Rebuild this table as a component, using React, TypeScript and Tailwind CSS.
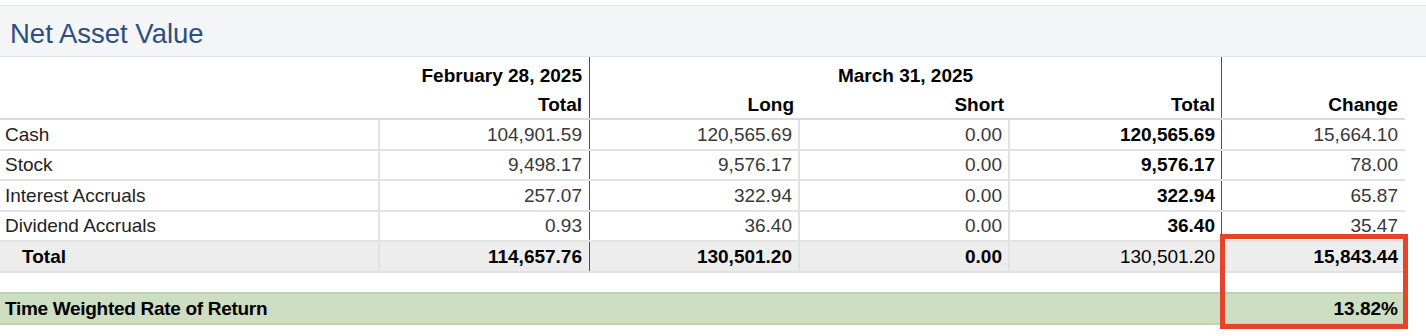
const rows = [
  { label: "Cash", feb: "104,901.59", long: "120,565.69", short: "0.00", total: "120,565.69", change: "15,664.10" },
  { label: "Stock", feb: "9,498.17", long: "9,576.17", short: "0.00", total: "9,576.17", change: "78.00" },
  { label: "Interest Accruals", feb: "257.07", long: "322.94", short: "0.00", total: "322.94", change: "65.87" },
  { label: "Dividend Accruals", feb: "0.93", long: "36.40", short: "0.00", total: "36.40", change: "35.47" },
];

export default function App() {
  return (
    <div className="relative w-[1426px] h-[336px] bg-white overflow-hidden font-['Liberation_Sans',Arial,sans-serif] text-[19px] leading-none">
      {/* Titre */}
      <div className="mt-[5px] h-[52px] border-y border-[#e1e3e6] bg-[#f4f5f7] pl-[10px] flex items-center">
        <h2 className="text-[27.5px] text-[#2d4e7f] pt-[6px]">Net Asset Value</h2>
      </div>

      <div className="w-[1405px]">
        {/* En-tête */}
        <div className="flex border-b-2 border-[#d9d9d9] text-black font-bold">
          <div className="w-[380px]" />
          <div className="w-[210px] border-r border-[#505050] flex flex-col items-end pr-[7px]">
            <div className="h-[34px] flex items-center pt-[2px]">February 28, 2025</div>
            <div className="h-[27px] flex items-center">Total</div>
          </div>
          <div className="w-[632px] border-r border-[#505050] flex flex-col">
            <div className="h-[34px] flex items-center justify-center pt-[2px]">March 31, 2025</div>
            <div className="h-[27px] flex">
              <div className="w-[210px] flex items-center justify-end pr-[6px]">Long</div>
              <div className="w-[210px] flex items-center justify-end pr-[6px]">Short</div>
              <div className="w-[211px] flex items-center justify-end pr-[6px]">Total</div>
            </div>
          </div>
          <div className="w-[183px] flex flex-col items-end pr-[7px]">
            <div className="h-[34px]" />
            <div className="h-[27px] flex items-center">Change</div>
          </div>
        </div>

        {/* Lignes */}
        {rows.map((r) => (
          <div key={r.label} className="flex h-[30.5px] border-b-2 border-[#e2e2e2] text-[#383838]">
            <div className="w-[380px] border-r-2 border-[#e2e2e2] pl-[5px] flex items-center text-[#222]">{r.label}</div>
            <div className="w-[210px] border-r border-[#505050] pr-[7px] flex items-center justify-end">{r.feb}</div>
            <div className="w-[210px] border-r-2 border-[#e2e2e2] pr-[6px] flex items-center justify-end">{r.long}</div>
            <div className="w-[210px] border-r-2 border-[#e2e2e2] pr-[6px] flex items-center justify-end">{r.short}</div>
            <div className="w-[212px] border-r border-[#505050] pr-[6px] flex items-center justify-end font-bold text-black">{r.total}</div>
            <div className="w-[183px] pr-[7px] flex items-center justify-end">{r.change}</div>
          </div>
        ))}

        {/* Total */}
        <div className="flex h-[31px] border-b-2 border-[#e2e2e2] bg-[#ededed] text-black">
          <div className="w-[380px] border-r-2 border-[#e2e2e2] pl-[22px] flex items-center font-bold">Total</div>
          <div className="w-[210px] border-r border-[#505050] pr-[7px] flex items-center justify-end font-bold">114,657.76</div>
          <div className="w-[210px] border-r-2 border-[#e2e2e2] pr-[6px] flex items-center justify-end font-bold">130,501.20</div>
          <div className="w-[210px] border-r-2 border-[#e2e2e2] pr-[6px] flex items-center justify-end font-bold">0.00</div>
          <div className="w-[212px] border-r border-[#505050] pr-[6px] flex items-center justify-end">130,501.20</div>
          <div className="w-[183px] pr-[7px] flex items-center justify-end font-bold">15,843.44</div>
        </div>

        {/* Rendement */}
        <div className="mt-[19px] h-[33px] border-y-2 border-[#bdd3ad] bg-[#cddec2] flex items-center justify-between px-[5px] pr-[7px] font-bold text-black">
          <span className="tracking-[-0.3px]">Time Weighted Rate of Return</span>
          <span>13.82%</span>
        </div>
      </div>

      {/* Cadre rouge */}
      <div className="absolute left-[1220px] top-[234px] w-[188px] h-[95px] border-[5px] border-[#e5432a]" />
    </div>
  );
}
